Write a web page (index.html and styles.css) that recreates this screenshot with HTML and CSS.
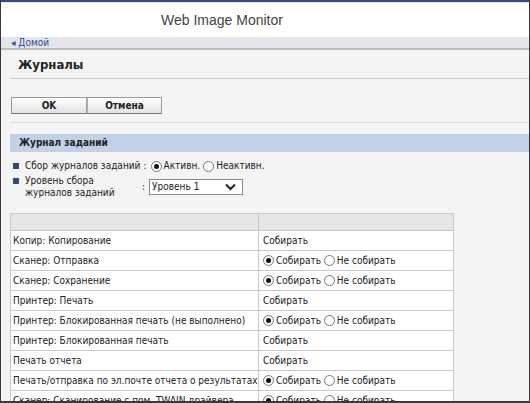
FILE: index.html
```html
<!DOCTYPE html>
<html lang="ru">
<head>
  <meta charset="UTF-8">
  <title>Web Image Monitor</title>
  <link rel="stylesheet" href="styles.css">
</head>
<body>
  <div class="frame">
    <div class="header">Web Image Monitor</div>
    <div class="crumbs"><a href="#">&#9666; Домой</a></div>

    <div class="main">
      <h1 class="title">Журналы</h1>

      <div class="actions">
        <button class="btn">OK</button><button class="btn">Отмена</button>
      </div>

      <div class="section">Журнал заданий</div>

      <div class="field">
        <span class="bullet"></span>
        <span class="label">Сбор журналов заданий</span>
        <span class="colon">:</span>
        <label class="radio"><span class="dot on"></span>Активн.</label>
        <label class="radio"><span class="dot"></span>Неактивн.</label>
      </div>
      <div class="field two">
        <span class="bullet"></span>
        <span class="label wide">Уровень сбора<br>журналов заданий</span>
        <span class="colon">:</span>
        <span class="select">Уровень 1
          <svg width="11" height="8" viewBox="0 0 11 8"><path d="M1 1.5 L5.5 6 L10 1.5" fill="none" stroke="#222" stroke-width="2"/></svg>
        </span>
      </div>

      <table class="log">
        <tr class="head"><th class="c1"></th><th></th></tr>
        <tr><td>Копир: Копирование</td><td>Собирать</td></tr>
        <tr><td>Сканер: Отправка</td><td><span class="dot on"></span>Собирать <span class="dot"></span>Не собирать</td></tr>
        <tr><td>Сканер: Сохранение</td><td><span class="dot on"></span>Собирать <span class="dot"></span>Не собирать</td></tr>
        <tr><td>Принтер: Печать</td><td>Собирать</td></tr>
        <tr><td>Принтер: Блокированная печать (не выполнено)</td><td><span class="dot on"></span>Собирать <span class="dot"></span>Не собирать</td></tr>
        <tr><td>Принтер: Блокированная печать</td><td>Собирать</td></tr>
        <tr><td>Печать отчета</td><td>Собирать</td></tr>
        <tr><td>Печать/отправка по эл.почте отчета о результатах</td><td><span class="dot on"></span>Собирать <span class="dot"></span>Не собирать</td></tr>
        <tr><td>Сканер: Сканирование с пом. TWAIN драйвера</td><td><span class="dot on"></span>Собирать <span class="dot"></span>Не собирать</td></tr>
      </table>
    </div>
  </div>
</body>
</html>
```

FILE: styles.css
```css
* {
  margin: 0;
  padding: 0;
  box-sizing: border-box;
}

body {
  background: #3a3a3a;
  font-family: 'DejaVu Sans Condensed', 'DejaVu Sans', Tahoma, sans-serif;
  font-size: 10px;
  color: #222;
  overflow: hidden;
}

.frame {
  width: 528px;
  height: 401px;
  margin-left: 1px;
  background: #f4f4f4;
  border-top: 2px solid #3b4a86;
  overflow: hidden;
}

.header {
  height: 35px;
  background: #fff;
  border-top: 1px solid #dfe3ef;
  padding: 9px 0 0 160px;
  font-family: 'Liberation Sans', Arial, sans-serif;
  font-size: 14px;
  color: #444;
}

.crumbs {
  height: 13px;
  background: #e3e5eb;
  border-bottom: 2px solid #bdbdbd;
  padding-left: 10px;
  line-height: 11px;
}

.crumbs a {
  color: #2f4f9a;
  text-decoration: none;
  font-size: 10px;
}

.main {
  padding: 0 0 0 9px;
}

.title {
  font-size: 13px;
  font-weight: bold;
  padding: 7px 0 6px 8px;
  height: 29px;
  border-bottom: 1px solid #c8c8c8;
}

.actions {
  padding: 18px 0 8px 1px;
  border-bottom: 1px solid #dcdcdc;
  display: flex;
}

.btn {
  width: 76px;
  height: 17px;
  font-family: inherit;
  font-size: 10px;
  font-weight: bold;
  color: #222;
  background: linear-gradient(#ffffff, #e2e2e2);
  border: 1px solid #9a9a9a;
  border-bottom-color: #777;
}

.btn + .btn {
  width: 75px;
  border-left: 1px solid #b0b0b0;
}

.section {
  margin-top: 11px;
  height: 18px;
  background: #c1d1e8;
  font-weight: bold;
  line-height: 18px;
  padding-left: 9px;
}

.field {
  display: flex;
  align-items: center;
  padding: 8px 0 0 3px;
  line-height: 12px;
}

.field.two {
  padding-top: 3px;
}

.bullet {
  width: 6px;
  height: 6px;
  background: #2e4a7a;
  margin-right: 6px;
}

.field.two .bullet {
  align-self: flex-start;
  margin-top: 3px;
}

.label.wide {
  width: 114px;
}

.colon {
  margin: 0 4px 0 3px;
}

.radio {
  display: flex;
  align-items: center;
  margin-right: 3px;
}

.dot {
  display: inline-block;
  width: 11px;
  height: 11px;
  border: 1px solid #777;
  border-radius: 50%;
  background: #fff;
  margin-right: 2px;
  vertical-align: -2px;
  position: relative;
}

.dot.on::after {
  content: "";
  position: absolute;
  left: 2px;
  top: 2px;
  width: 5px;
  height: 5px;
  border-radius: 50%;
  background: #111;
}

.select {
  width: 94px;
  height: 16px;
  background: #fff;
  border: 1px solid #8a8a8a;
  display: flex;
  align-items: center;
  justify-content: space-between;
  padding: 0 6px 0 2px;
}

.log {
  margin-top: 14px;
  width: 444px;
  border-collapse: collapse;
  table-layout: fixed;
  background: #fff;
}

.log td, .log th {
  border: 1px solid #c8c8c8;
  height: 20px;
  padding: 0 2px;
  text-align: left;
  white-space: nowrap;
  overflow: hidden;
}

.log .head th {
  background: #e6e6e6;
  height: 17px;
}

.log .c1 {
  width: 248px;
}

.log td:last-child {
  padding-left: 4px;
}
```
